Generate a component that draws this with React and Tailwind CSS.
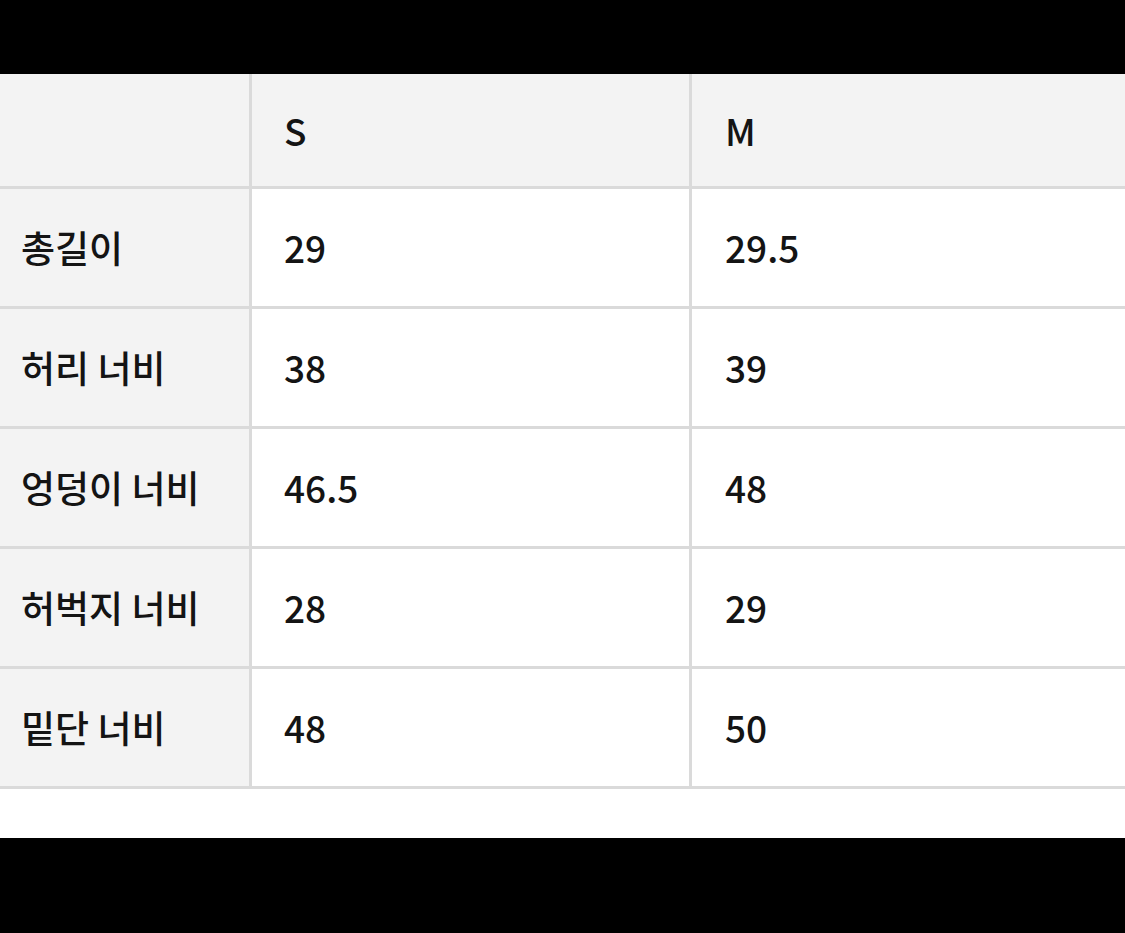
import React from "react";

const rows = [
  ["총길이", "29", "29.5"],
  ["허리 너비", "38", "39"],
  ["엉덩이 너비", "46.5", "48"],
  ["허벅지 너비", "28", "29"],
  ["밑단 너비", "48", "50"],
];

export default function App() {
  const font = { fontFamily: '"Noto Sans CJK KR", "Noto Sans", sans-serif' };
  return (
    <div className="w-[1125px] h-[933px] bg-black flex flex-col" style={font}>
      <div className="h-[74px] bg-black" />
      <div className="bg-white flex flex-col">
        <div className="grid grid-cols-[249px_437px_1fr] gap-[3px] bg-[#dadada] pb-[3px] text-[37px] font-medium text-[#141414] leading-none">
          <div className="h-[112px] bg-[#f3f3f3]" />
          <div className="h-[112px] bg-[#f3f3f3] flex items-center pl-[32px]">S</div>
          <div className="h-[112px] bg-[#f3f3f3] flex items-center pl-[33px]">M</div>
          {rows.map((r) => (
            <React.Fragment key={r[0]}>
              <div className="h-[117px] bg-[#f3f3f3] flex items-center pl-[21px]">{r[0]}</div>
              <div className="h-[117px] bg-white flex items-center pl-[32px]">{r[1]}</div>
              <div className="h-[117px] bg-white flex items-center pl-[33px]">{r[2]}</div>
            </React.Fragment>
          ))}
        </div>
        <div className="h-[49px] bg-white" />
      </div>
      <div className="flex-1 bg-black" />
    </div>
  );
}
